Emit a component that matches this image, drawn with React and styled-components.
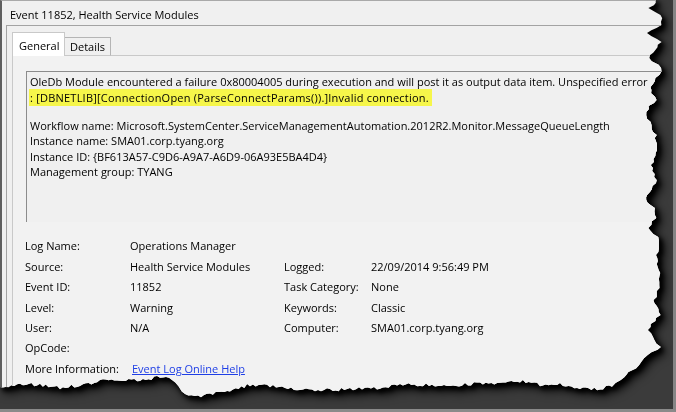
import React from "react";
import styled, { createGlobalStyle } from "styled-components";

const Global = createGlobalStyle`
  html, body { margin: 0; padding: 0; background: #ffffff; }
  #root { width: 676px; height: 412px; }
`;

/* ---------- torn edge outline (computed once) ---------- */
const RIGHT = [
  [0, 657], [8, 650], [15, 662], [25, 660], [33, 648], [42, 660], [50, 657], [58, 648],
  [68, 662], [78, 656], [90, 650], [100, 655], [112, 645], [122, 650], [135, 655],
  [150, 657], [165, 652], [180, 656], [192, 650], [200, 646], [208, 655], [218, 656],
  [228, 648], [240, 660], [255, 656], [270, 659], [285, 660], [300, 655], [315, 660],
  [330, 647], [340, 655], [347, 660], [355, 648], [365, 640], [372, 630], [380, 620],
  [386, 612],
];
const BOTTOM = [
  [600, 389], [580, 388], [560, 384], [540, 385], [520, 381], [500, 384], [480, 383],
  [450, 386], [420, 385], [400, 384], [380, 388], [350, 389], [330, 390], [300, 390],
  [270, 386], [250, 385], [230, 390], [210, 395], [198, 397], [185, 394], [172, 379],
  [160, 377], [140, 381], [120, 380], [100, 381], [80, 385], [60, 388], [40, 385],
  [20, 384], [0, 387],
];

function makeRand(seed) {
  let s = seed;
  return () => {
    s = (s * 16807) % 2147483647;
    return (s - 1) / 2147483646;
  };
}

function buildTear() {
  const rnd = makeRand(12345);
  const pts = ["0px 0px"];
  const jag = () => (rnd() - 0.5) * 3.4;
  for (let i = 0; i < RIGHT.length - 1; i++) {
    const [y0, x0] = RIGHT[i];
    const [y1, x1] = RIGHT[i + 1];
    const steps = Math.max(1, Math.round(Math.abs(y1 - y0) / 3));
    for (let k = 0; k < steps; k++) {
      const t = k / steps;
      const y = y0 + (y1 - y0) * t;
      const x = x0 + (x1 - x0) * t + jag();
      pts.push(`${x.toFixed(1)}px ${y.toFixed(1)}px`);
    }
  }
  const first = [[612, 386], ...BOTTOM];
  for (let i = 0; i < first.length - 1; i++) {
    const [x0, y0] = first[i];
    const [x1, y1] = first[i + 1];
    const steps = Math.max(1, Math.round(Math.abs(x1 - x0) / 3));
    for (let k = 0; k < steps; k++) {
      const t = k / steps;
      const x = x0 + (x1 - x0) * t;
      const y = y0 + (y1 - y0) * t + jag();
      pts.push(`${x.toFixed(1)}px ${y.toFixed(1)}px`);
    }
  }
  pts.push("0px 387px");
  return `polygon(${pts.join(", ")})`;
}
const TEAR = buildTear();

/* ---------- frame & paper ---------- */
const Frame = styled.div`
  width: 676px;
  height: 412px;
  box-sizing: border-box;
  background: #3b3b3b;
  border-right: 3px solid #858585;
  border-bottom: 3px solid #8a8a8a;
  overflow: hidden;
`;

const ShadowWrap = styled.div`
  width: 100%;
  height: 100%;
  filter: drop-shadow(3px 3px 2px #000) drop-shadow(2px 2px 4px #000);
`;

const Paper = styled.div`
  width: 100%;
  height: 100%;
  box-sizing: border-box;
  clip-path: ${TEAR};
  background: #f0f0f0;
  border-left: 2px solid #5f5f5f;
  border-top: 1px solid #a9a9a9;
  display: flex;
  flex-direction: column;
  font-family: "Open Sans", "Noto Sans", sans-serif;
  font-size: 11px;
  color: #000;
  overflow: hidden;
`;

const TitleBar = styled.div`
  height: 24px;
  flex: none;
  box-sizing: border-box;
  padding: 2px 0 0 8px;
  display: flex;
  align-items: center;
  white-space: nowrap;
`;

const Client = styled.div`
  flex: 1;
  margin-left: 4px;
  border-left: 1px solid #a3a3a3;
  border-top: 1px solid #a3a3a3;
  padding: 7px 0 0 5px;
  display: flex;
  flex-direction: column;
  min-height: 0;
`;

/* ---------- tabs ---------- */
const TabStrip = styled.div`
  display: flex;
  align-items: flex-end;
  height: 23px;
  margin-bottom: -1px;
  position: relative;
  z-index: 1;
`;

const Tab = styled.div`
  box-sizing: border-box;
  height: ${(p) => (p.$active ? "24px" : "19px")};
  width: ${(p) => p.$w}px;
  padding: ${(p) => (p.$active ? "2px 0 0 6px" : "0 0 0 5px")};
  border: 1px solid ${(p) => (p.$active ? "#c9c9c9" : "#b5b5b5")};
  border-bottom: ${(p) => (p.$active ? "none" : "1px solid #c9c9c9")};
  border-left: ${(p) => (p.$active ? "1px solid #c9c9c9" : "none")};
  background: ${(p) => (p.$active ? "#ffffff" : "#f0f0f0")};
  display: flex;
  align-items: center;
  white-space: nowrap;
`;

const Panel = styled.div`
  flex: 1;
  border-top: 1px solid #c9c9c9;
  border-left: 1px solid #c9c9c9;
  background: #f2f2f2;
  padding: 15px 0 0 0;
  display: flex;
  flex-direction: column;
`;

/* ---------- description box ---------- */
const DescBox = styled.div`
  margin-left: 13px;
  height: 151px;
  box-sizing: border-box;
  border-top: 1px solid #8c8c8c;
  border-left: 1px solid #8c8c8c;
  background: #f0f0f0;
  padding: 2px 0 0 3px;
  line-height: 15.5px;
  white-space: nowrap;
  overflow: hidden;
`;

const Para = styled.div`
  & + & {
    margin-top: 12.8px;
  }
`;

const Line = styled.div``;

const Highlight = styled.span`
  background: #f6f64a;
  padding: 1px 3px 1px 1px;
  margin-left: -1px;
  letter-spacing: 0.22px;
`;

/* ---------- property grid ---------- */
const Props = styled.div`
  margin: 13.8px 0 0 12px;
  display: grid;
  grid-template-columns: 105px 154px 87px auto;
  grid-auto-rows: 20.4px;
  align-items: center;
  white-space: nowrap;
`;

const Cell = styled.div``;

const Link = styled.a`
  color: #1f3fe6;
  text-decoration: underline;
  margin-left: 2px;
  cursor: pointer;
`;

const rows = [
  ["Log Name:", "Operations Manager", "", ""],
  ["Source:", "Health Service Modules", "Logged:", "22/09/2014 9:56:49 PM"],
  ["Event ID:", "11852", "Task Category:", "None"],
  ["Level:", "Warning", "Keywords:", "Classic"],
  ["User:", "N/A", "Computer:", "SMA01.corp.tyang.org"],
  ["OpCode:", "", "", ""],
];

export default function App() {
  return (
    <>
      <Global />
      <Frame>
        <ShadowWrap>
          <Paper>
            <TitleBar>Event 11852, Health Service Modules</TitleBar>
            <Client>
              <TabStrip>
                <Tab $active $w={53}>General</Tab>
                <Tab $w={46}>Details</Tab>
              </TabStrip>
              <Panel>
                <DescBox>
                  <Para>
                    <Line>
                      OleDb Module encountered a failure 0x80004005 during execution and will post it as output data item. Unspecified error
                    </Line>
                    <Line>
                      <Highlight>: [DBNETLIB][ConnectionOpen (ParseConnectParams()).]Invalid connection.</Highlight>
                    </Line>
                  </Para>
                  <Para>
                    <Line>Workflow name: Microsoft.SystemCenter.ServiceManagementAutomation.2012R2.Monitor.MessageQueueLength</Line>
                    <Line>Instance name: SMA01.corp.tyang.org</Line>
                    <Line>Instance ID: {"{BF613A57-C9D6-A9A7-A6D9-06A93E5BA4D4}"}</Line>
                    <Line>Management group: TYANG</Line>
                  </Para>
                </DescBox>
                <Props>
                  {rows.map((r, i) =>
                    r.map((c, j) => <Cell key={`${i}-${j}`}>{c}</Cell>)
                  )}
                  <Cell>More Information:</Cell>
                  <Cell>
                    <Link>Event Log Online Help</Link>
                  </Cell>
                </Props>
              </Panel>
            </Client>
          </Paper>
        </ShadowWrap>
      </Frame>
    </>
  );
}
